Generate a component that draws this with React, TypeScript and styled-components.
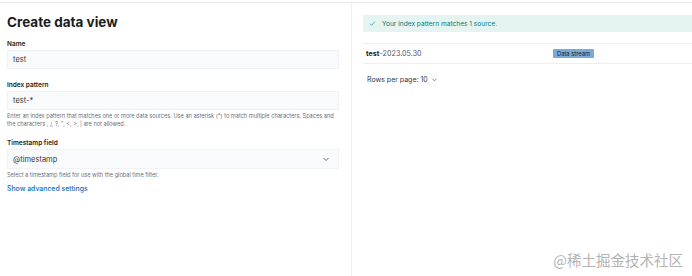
import styled, { createGlobalStyle } from "styled-components";

const GlobalStyle = createGlobalStyle`
  html, body {
    margin: 0;
    padding: 0;
    background: #fff;
  }
  body {
    font-family: Inter, "Noto Sans", "Liberation Sans", sans-serif;
    color: #1a1c21;
  }
`;

const Page = styled.div`
  width: 692px;
  height: 276px;
  box-sizing: border-box;
  margin-top: 2px;
  border-top: 1px solid #e6e8ec;
  display: flex;
  position: relative;
  overflow: hidden;
`;

const LeftPanel = styled.div`
  width: 352px;
  box-sizing: border-box;
  padding: 11px 12px 0 7px;
  border-right: 1px solid #eef0f3;
  display: flex;
  flex-direction: column;
`;

const RightPanel = styled.div`
  flex: 1;
  padding: 12px 0 0 11px;
  display: flex;
  flex-direction: column;
`;

const Title = styled.h1`
  margin: 0 0 9px;
  font-size: 13.5px;
  line-height: 17px;
  font-weight: 700;
`;

const Field = styled.div<{ $gap?: number }>`
  display: flex;
  flex-direction: column;
  margin-bottom: ${(p) => p.$gap ?? 12}px;
`;

const Label = styled.label`
  font-size: 6.5px;
  line-height: 9px;
  font-weight: 600;
  margin-bottom: 1px;
`;

const InputBox = styled.div<{ $height?: number }>`
  height: ${(p) => p.$height ?? 19}px;
  box-sizing: border-box;
  background: #f9fafb;
  box-shadow: inset 0 0 0 1px rgba(17, 43, 134, 0.04);
  display: flex;
  align-items: center;
  justify-content: space-between;
  padding: 0 9px 0 6px;
  font-size: 7.5px;
  color: #343741;
`;

const Help = styled.div`
  font-size: 5.6px;
  line-height: 8px;
  color: #69707d;
  margin-top: 2px;
`;

const Link = styled.a`
  font-size: 6.9px;
  line-height: 10px;
  color: #0a6fb5;
  font-weight: 500;
  text-decoration: none;
`;

const Callout = styled.div`
  height: 17px;
  background: #e6f4f1;
  display: flex;
  align-items: center;
  gap: 6px;
  padding-left: 6px;
  font-size: 6.6px;
  color: #017d73;
`;

const Table = styled.div`
  margin-top: 11px;
  border-top: 1px solid #eceef2;
  border-bottom: 1px solid #eceef2;
  height: 19px;
  display: flex;
  align-items: center;
  font-size: 7.2px;
  color: #535966;
`;

const Cell = styled.div<{ $width?: string }>`
  width: ${(p) => p.$width ?? "auto"};
  padding-left: 3px;
`;

const Strong = styled.b`
  color: #1a1c21;
  font-weight: 700;
`;

const Badge = styled.span`
  display: inline-block;
  background: #79aad9;
  color: #1a1c21;
  font-size: 5.8px;
  line-height: 9px;
  padding: 0 4px;
  border-radius: 1px;
`;

const Pager = styled.div`
  margin-top: 11px;
  padding-left: 4px;
  font-size: 7px;
  color: #343741;
  display: flex;
  align-items: center;
  gap: 3px;
`;

const Watermark = styled.div`
  position: absolute;
  right: 9px;
  bottom: 8px;
  font-family: "Noto Sans CJK SC", sans-serif;
  font-size: 14.5px;
  color: #b3b3b3;
`;

const Chevron = ({ size = 8 }: { size?: number }) => (
  <svg width={size} height={size} viewBox="0 0 16 16" fill="none">
    <path d="M3 6l5 5 5-5" stroke="#343741" strokeWidth="1.4" />
  </svg>
);

const Check = () => (
  <svg width="7" height="7" viewBox="0 0 16 16" fill="none">
    <path d="M2.5 8.5l3.5 3.5 7.5-8" stroke="#017d73" strokeWidth="1.4" />
  </svg>
);

export default function App() {
  return (
    <>
      <GlobalStyle />
      <Page>
        <LeftPanel>
          <Title>Create data view</Title>
          <Field>
            <Label>Name</Label>
            <InputBox>test</InputBox>
          </Field>
          <Field $gap={11}>
            <Label>Index pattern</Label>
            <InputBox>test-*</InputBox>
            <Help>
              Enter an index pattern that matches one or more data sources. Use an asterisk (*) to match multiple
              characters. Spaces and the characters , /, ?, ", &lt;, &gt;, | are not allowed.
            </Help>
          </Field>
          <Field $gap={5}>
            <Label>Timestamp field</Label>
            <InputBox $height={20}>
              @timestamp
              <Chevron />
            </InputBox>
            <Help>Select a timestamp field for use with the global time filter.</Help>
          </Field>
          <Link href="#">Show advanced settings</Link>
        </LeftPanel>
        <RightPanel>
          <Callout>
            <Check />
            Your index pattern matches 1 source.
          </Callout>
          <Table>
            <Cell $width="184px">
              <Strong>test</Strong>-2023.05.30
            </Cell>
            <Cell>
              <Badge>Data stream</Badge>
            </Cell>
          </Table>
          <Pager>
            Rows per page: 10
            <Chevron size={7} />
          </Pager>
        </RightPanel>
        <Watermark>@稀土掘金技术社区</Watermark>
      </Page>
    </>
  );
}
